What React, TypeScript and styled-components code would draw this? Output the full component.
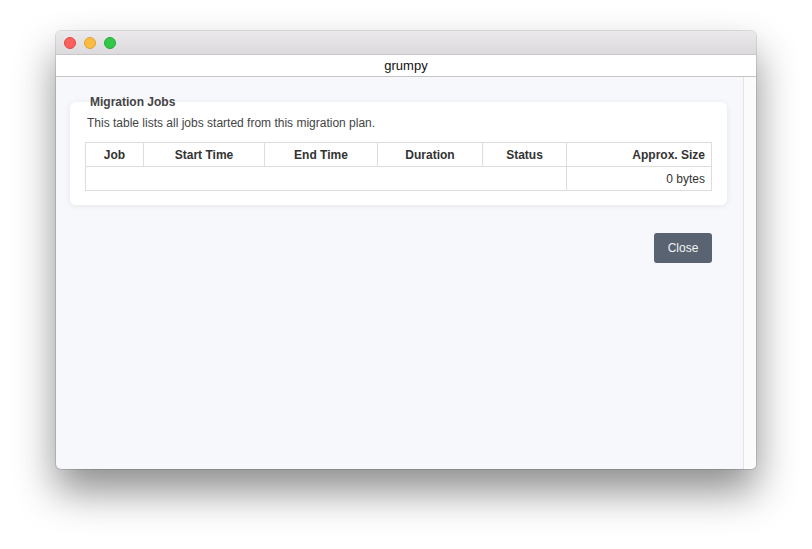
import styled, { createGlobalStyle } from 'styled-components';

const GlobalStyle = createGlobalStyle`
  html, body {
    margin: 0;
    padding: 0;
    background: #ffffff;
    font-family: "Liberation Sans", Arial, sans-serif;
  }
`;

const columns = [
  { label: 'Job', width: 58, align: 'center' },
  { label: 'Start Time', width: 121, align: 'center' },
  { label: 'End Time', width: 113, align: 'center' },
  { label: 'Duration', width: 105, align: 'center' },
  { label: 'Status', width: 84, align: 'center' },
  { label: 'Approx. Size', width: 145, align: 'right' },
];

const App: React.FC = () => {
  return (
    <>
      <GlobalStyle />
      <Stage>
        <Window>
          <TitleBar>
            <Light $color="#fc605c" $edge="#de4a46" />
            <Light $color="#fdbc40" $edge="#dea236" />
            <Light $color="#34c84a" $edge="#27aa35" />
          </TitleBar>
          <TabBar>grumpy</TabBar>
          <Body>
            <Main>
              <Card>
                <Legend>Migration Jobs</Legend>
                <Description>This table lists all jobs started from this migration plan.</Description>
                <Table>
                  <colgroup>
                    {columns.map((c) => (
                      <col key={c.label} style={{ width: c.width }} />
                    ))}
                  </colgroup>
                  <thead>
                    <tr>
                      {columns.map((c) => (
                        <HeadCell key={c.label} $align={c.align}>
                          {c.label}
                        </HeadCell>
                      ))}
                    </tr>
                  </thead>
                  <tbody>
                    <tr>
                      <Cell colSpan={5} />
                      <Cell $align="right">0 bytes</Cell>
                    </tr>
                  </tbody>
                </Table>
              </Card>
              <Actions>
                <Button>Close</Button>
              </Actions>
            </Main>
            <ScrollTrack />
          </Body>
        </Window>
      </Stage>
    </>
  );
};

export default App;

// Styled Components
const Stage = styled.div`
  width: 812px;
  height: 549px;
  padding: 31px 0 0 56px;
  box-sizing: border-box;
`;

const Window = styled.div`
  width: 700px;
  height: 438px;
  display: flex;
  flex-direction: column;
  border-radius: 5px;
  overflow: hidden;
  background: #f7f8fc;
  box-shadow: 0 22px 40px rgba(0, 0, 0, 0.45), 0 0 0 1px rgba(0, 0, 0, 0.12);
`;

const TitleBar = styled.div`
  height: 23px;
  flex: none;
  display: flex;
  align-items: center;
  gap: 8px;
  padding-left: 8px;
  background: linear-gradient(#ebe9eb, #dcdadc);
  border-bottom: 1px solid #c9c7c9;
`;

const Light = styled.span<{ $color: string; $edge: string }>`
  width: 12px;
  height: 12px;
  border-radius: 50%;
  box-sizing: border-box;
  background: ${(p) => p.$color};
  border: 0.5px solid ${(p) => p.$edge};
`;

const TabBar = styled.div`
  height: 21px;
  flex: none;
  display: flex;
  align-items: center;
  justify-content: center;
  background: #ffffff;
  border-bottom: 1px solid #c4c4c4;
  font-size: 13px;
  color: #111;
`;

const Body = styled.div`
  flex: 1;
  display: flex;
`;

const Main = styled.div`
  flex: 1;
  padding: 18px 16px 0 14px;
  display: flex;
  flex-direction: column;
`;

const ScrollTrack = styled.div`
  width: 15px;
  flex: none;
  box-sizing: border-box;
  background: #fbfbfb;
  border-left: 1px solid #e4e4e6;
`;

const Card = styled.fieldset`
  margin: 0;
  padding: 6px 15px 14px 15px;
  border: none;
  border-radius: 6px;
  background: #ffffff;
  box-shadow: 0 1px 6px rgba(0, 0, 0, 0.08);
`;

const Legend = styled.legend`
  padding: 0 5px;
  font-size: 12px;
  font-weight: bold;
  color: #444;
  line-height: 14px;
`;

const Description = styled.p`
  margin: 0 0 11px 2px;
  font-size: 12px;
  line-height: 16px;
  color: #444;
`;

const Table = styled.table`
  width: 100%;
  border-collapse: collapse;
  table-layout: fixed;
  font-size: 12px;
  color: #333;
`;

const HeadCell = styled.th<{ $align: string }>`
  height: 23px;
  padding: 0 6px;
  border: 1px solid #dddddd;
  font-weight: bold;
  text-align: ${(p) => p.$align};
`;

const Cell = styled.td<{ $align?: string }>`
  height: 23px;
  padding: 0 6px;
  border: 1px solid #dddddd;
  text-align: ${(p) => p.$align || 'left'};
`;

const Actions = styled.div`
  display: flex;
  justify-content: flex-end;
  padding: 28px 15px 0 0;
`;

const Button = styled.button`
  width: 58px;
  height: 30px;
  border: none;
  border-radius: 3px;
  background: #5a6371;
  color: #f2f3f5;
  font-family: "Liberation Sans", Arial, sans-serif;
  font-size: 12px;
  cursor: pointer;
`;
